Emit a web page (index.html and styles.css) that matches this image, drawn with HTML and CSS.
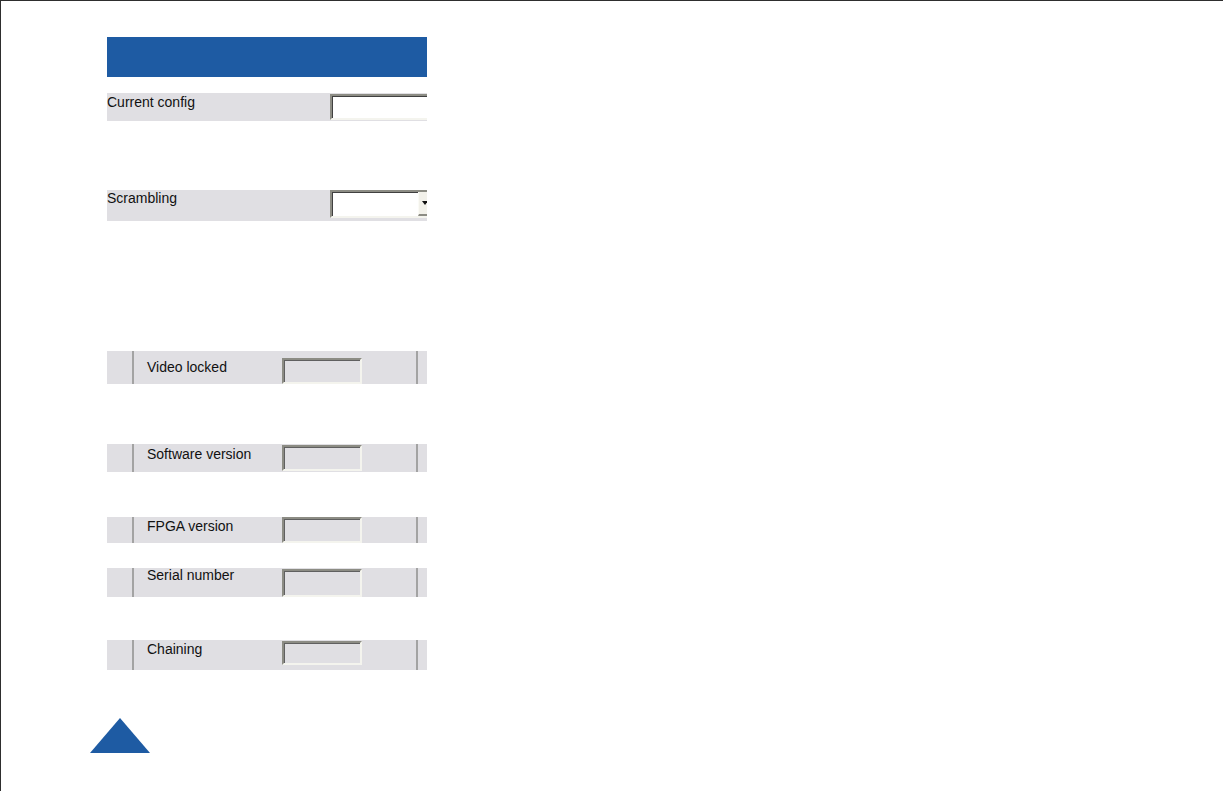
FILE: index.html
```html
<!DOCTYPE html>
<html>
<head>
<meta charset="utf-8">
<link rel="stylesheet" href="styles.css">
</head>
<body>
<div class="page">
  <div class="panel">
    <div class="header"></div>

    <div class="row row-config">
      <span class="label">Current config</span>
      <span class="field field-white"></span>
    </div>

    <div class="row row-scramble">
      <span class="label">Scrambling</span>
      <span class="combo"><span class="combo-btn"><span class="arrow"></span></span></span>
    </div>

    <div class="srow s-video">
      <span class="cell-left"></span>
      <span class="slabel">Video locked</span>
      <span class="sfield"></span>
      <span class="cell-right"></span>
    </div>

    <div class="srow s-soft">
      <span class="cell-left"></span>
      <span class="slabel">Software version</span>
      <span class="sfield"></span>
      <span class="cell-right"></span>
    </div>

    <div class="srow s-fpga">
      <span class="cell-left"></span>
      <span class="slabel">FPGA version</span>
      <span class="sfield"></span>
      <span class="cell-right"></span>
    </div>

    <div class="srow s-serial">
      <span class="cell-left"></span>
      <span class="slabel">Serial number</span>
      <span class="sfield"></span>
      <span class="cell-right"></span>
    </div>

    <div class="srow s-chain">
      <span class="cell-left"></span>
      <span class="slabel">Chaining</span>
      <span class="sfield"></span>
      <span class="cell-right"></span>
    </div>
  </div>

  <div class="nav-up">
    <svg width="60" height="36" viewBox="0 0 60 36"><polygon points="30,0 60,35 0,35" fill="#1e5ba3"/></svg>
  </div>
</div>
</body>
</html>
```

FILE: styles.css
```css
html, body {
  margin: 0;
  padding: 0;
  background: #fff;
}
.page {
  box-sizing: border-box;
  width: 1223px;
  height: 791px;
  border-top: 1px solid #2e2e2e;
  border-left: 1px solid #2e2e2e;
  padding-top: 36px;
  padding-left: 106px;
  font-family: "Liberation Sans", Arial, sans-serif;
  font-size: 14px;
  color: #111;
  overflow: hidden;
}
.panel {
  width: 320px;
  display: flex;
  flex-direction: column;
}
.header {
  height: 40px;
  background: #1e5ba3;
}
.row {
  display: flex;
  justify-content: space-between;
  align-items: flex-start;
  background: #e0dfe3;
  overflow: hidden;
}
.label {
  line-height: 16px;
  margin-top: 1px;
}
.row-config {
  margin-top: 16px;
  height: 28px;
}
.field {
  box-sizing: border-box;
  width: 110px;
  height: 26px;
  margin-top: 1px;
  margin-right: -13px;
  border-top: 2px solid #8c8c84;
  border-left: 2px solid #8c8c84;
  border-bottom: 2px solid #f4f4ee;
  border-right: 2px solid #f4f4ee;
  box-shadow: inset 1px 1px 0 #404040;
}
.field-white { background: #fff; }
.row-scramble {
  margin-top: 69px;
  height: 31px;
}
.row-scramble .label { margin-top: 0; }
.combo {
  box-sizing: border-box;
  display: flex;
  justify-content: flex-end;
  width: 97px;
  height: 28px;
  background: #fff;
  border-top: 2px solid #8c8c84;
  border-left: 2px solid #8c8c84;
  border-bottom: 2px solid #f4f4ee;
  box-shadow: inset 1px 1px 0 #404040;
}
.combo-btn {
  box-sizing: border-box;
  width: 9px;
  height: 24px;
  background: #f2f1ea;
  border-bottom: 2px solid #8c8c84;
  border-left: 1px solid #fbfbf6;
  display: flex;
  align-items: center;
  padding-left: 3px;
}
.arrow {
  width: 0;
  height: 0;
  border-left: 3px solid transparent;
  border-right: 3px solid transparent;
  border-top: 4px solid #111;
}
.srow {
  display: flex;
  align-items: flex-start;
  background: #e0dfe3;
  overflow: hidden;
}
.cell-left {
  width: 25px;
  align-self: stretch;
  border-right: 2px solid #a3a3a3;
}
.slabel {
  width: 148px;
  padding-left: 13px;
  box-sizing: border-box;
  line-height: 16px;
  margin-top: 8px;
  white-space: nowrap;
}
.sfield {
  box-sizing: border-box;
  width: 80px;
  height: 26px;
  margin-top: 7px;
  background: #e0dfe3;
  border-top: 2px solid #8c8c84;
  border-left: 2px solid #8c8c84;
  border-bottom: 2px solid #f4f4ee;
  border-right: 2px solid #f4f4ee;
  box-shadow: inset 1px 1px 0 #606060;
}
.cell-right {
  margin-left: 54px;
  align-self: stretch;
  border-left: 2px solid #a3a3a3;
  flex: 1;
}
.s-video { margin-top: 130px; height: 33px; }
.s-soft { margin-top: 60px; height: 28px; }
.s-soft .slabel { margin-top: 2px; }
.s-soft .sfield { margin-top: 1px; }
.s-fpga { margin-top: 45px; height: 26px; }
.s-fpga .slabel { margin-top: 1px; }
.s-fpga .sfield { margin-top: 0; }
.s-serial { margin-top: 25px; height: 29px; }
.s-serial .slabel { margin-top: 0; line-height: 14px; }
.s-serial .sfield { margin-top: 1px; height: 28px; }
.s-chain { margin-top: 43px; height: 30px; }
.s-chain .slabel { margin-top: 1px; }
.s-chain .sfield { margin-top: 1px; height: 24px; }
.nav-up {
  margin-top: 48px;
  margin-left: -17px;
  width: 60px;
  height: 36px;
  display: flex;
}
```
